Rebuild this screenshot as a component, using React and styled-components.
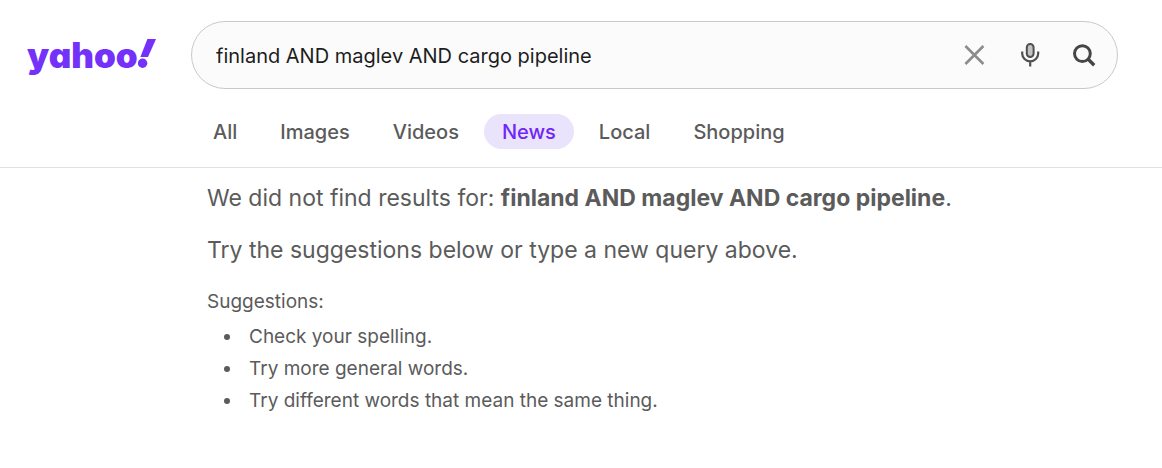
import React, { useState } from "react";
import styled, { createGlobalStyle } from "styled-components";

const TABS = ["All", "Images", "Videos", "News", "Local", "Shopping"];

const SUGGESTIONS = [
  "Check your spelling.",
  "Try more general words.",
  "Try different words that mean the same thing.",
];

const QUERY = "finland AND maglev AND cargo pipeline";

const CloseIcon = () => (
  <svg width="22" height="22" viewBox="0 0 22 22" fill="none" aria-hidden="true">
    <path d="M2.4 2l18 18M20.4 2l-18 18" stroke="#8c8c8c" strokeWidth="2.6" />
  </svg>
);

const MicIcon = () => (
  <svg width="24" height="26" viewBox="0 0 24 26" fill="none" aria-hidden="true">
    <rect x="9.8" y="2" width="6.8" height="13" rx="3.4" fill="#c4c4c4" stroke="#505050" strokeWidth="2" />
    <path d="M5.2 9.6v1.8a8 8 0 0 0 16 0V9.6M13.2 19.2v5.4" stroke="#505050" strokeWidth="2.2" />
  </svg>
);

const SearchIcon = () => (
  <svg width="24" height="24" viewBox="0 0 24 24" fill="none" aria-hidden="true">
    <circle cx="10.4" cy="10.6" r="7.9" stroke="#464646" strokeWidth="3" />
    <path d="M16.2 16.2l6 6" stroke="#464646" strokeWidth="3.4" />
  </svg>
);

export default function App() {
  const [query, setQuery] = useState(QUERY);

  return (
    <>
      <GlobalStyle />
      <Header>
        <SearchRow>
          <Logo href="#home" aria-label="yahoo!">
            yahoo
            <svg width="18" height="29" viewBox="0 0 18 29" aria-hidden="true">
              <path d="M9.4 0H18L10 18H2.4z" fill="#7431f9" />
              <circle cx="4.6" cy="24.2" r="4.7" fill="#7431f9" />
            </svg>
          </Logo>
          <SearchForm role="search" onSubmit={(e) => e.preventDefault()}>
            <SearchInput
              type="text"
              aria-label="Search query"
              value={query}
              onChange={(e) => setQuery(e.target.value)}
            />
            <IconButton type="button" aria-label="Clear" onClick={() => setQuery("")}>
              <CloseIcon />
            </IconButton>
            <IconButton type="button" aria-label="Search by voice">
              <MicIcon />
            </IconButton>
            <IconButton type="submit" aria-label="Search">
              <SearchIcon />
            </IconButton>
          </SearchForm>
        </SearchRow>
        <Tabs aria-label="Search categories">
          {TABS.map((tab) => (
            <Tab key={tab} href={`#${tab.toLowerCase()}`} $active={tab === "News"}>
              {tab}
            </Tab>
          ))}
        </Tabs>
      </Header>
      <Results>
        <Message>
          We did not find results for: <strong>{QUERY}</strong>.
        </Message>
        <Message>Try the suggestions below or type a new query above.</Message>
        <SuggestionsTitle>Suggestions:</SuggestionsTitle>
        <SuggestionList>
          {SUGGESTIONS.map((text) => (
            <Suggestion key={text}>{text}</Suggestion>
          ))}
        </SuggestionList>
      </Results>
    </>
  );
}

const GlobalStyle = createGlobalStyle`
  * {
    box-sizing: border-box;
  }
  body {
    margin: 0;
    background: #ffffff;
    color: #5b5b5b;
    font-family: Inter, "Liberation Sans", sans-serif;
  }
`;

const Header = styled.header`
  padding-top: 21px;
  border-bottom: 1px solid #e0e0e0;
`;

const SearchRow = styled.div`
  display: flex;
  align-items: center;
  padding: 0 44px 0 27px;
`;

const Logo = styled.a`
  display: flex;
  align-items: baseline;
  flex: 0 0 164px;
  color: #7431f9;
  font-size: 35px;
  font-weight: 900;
  line-height: 42px;
  font-feature-settings: "cv11";
  text-decoration: none;
`;

const SearchForm = styled.form`
  display: flex;
  align-items: center;
  flex: 1;
  min-width: 0;
  height: 68px;
  padding: 0 16px 0 24px;
  border: 1px solid #c9c9c9;
  border-radius: 34px;
  background: #fbfbfb;
`;

const SearchInput = styled.input`
  flex: 1;
  min-width: 0;
  padding: 2px 0 0;
  border: none;
  outline: none;
  background: transparent;
  color: #1d1d1d;
  font-family: inherit;
  font-size: 20px;
  line-height: 28px;
`;

const IconButton = styled.button`
  display: flex;
  align-items: center;
  justify-content: center;
  width: 34px;
  height: 40px;
  margin-left: 21px;
  padding: 0;
  border: none;
  background: transparent;
  cursor: pointer;
`;

const Tabs = styled.nav`
  display: flex;
  gap: 7px;
  padding: 25px 44px 18px 195px;
`;

const Tab = styled.a`
  padding: 2px 18px 0;
  border-radius: 18px;
  background: ${({ $active }) => ($active ? "#e9e3fc" : "transparent")};
  color: ${({ $active }) => ($active ? "#7126f5" : "#5b5b5b")};
  font-size: 20px;
  font-weight: 500;
  line-height: 33px;
  text-decoration: none;
`;

const Results = styled.main`
  padding: 14px 44px 24px 207px;
`;

const Message = styled.p`
  margin: 0 0 20px;
  font-size: 23px;
  line-height: 32px;
`;

const SuggestionsTitle = styled.h2`
  margin: 0 0 4px;
  font-size: 19px;
  font-weight: 400;
  line-height: 31px;
`;

const SuggestionList = styled.ul`
  margin: 0;
  padding-left: 36px;
  font-size: 19px;
  line-height: 32px;
`;

const Suggestion = styled.li`
  padding-left: 6px;
`;
